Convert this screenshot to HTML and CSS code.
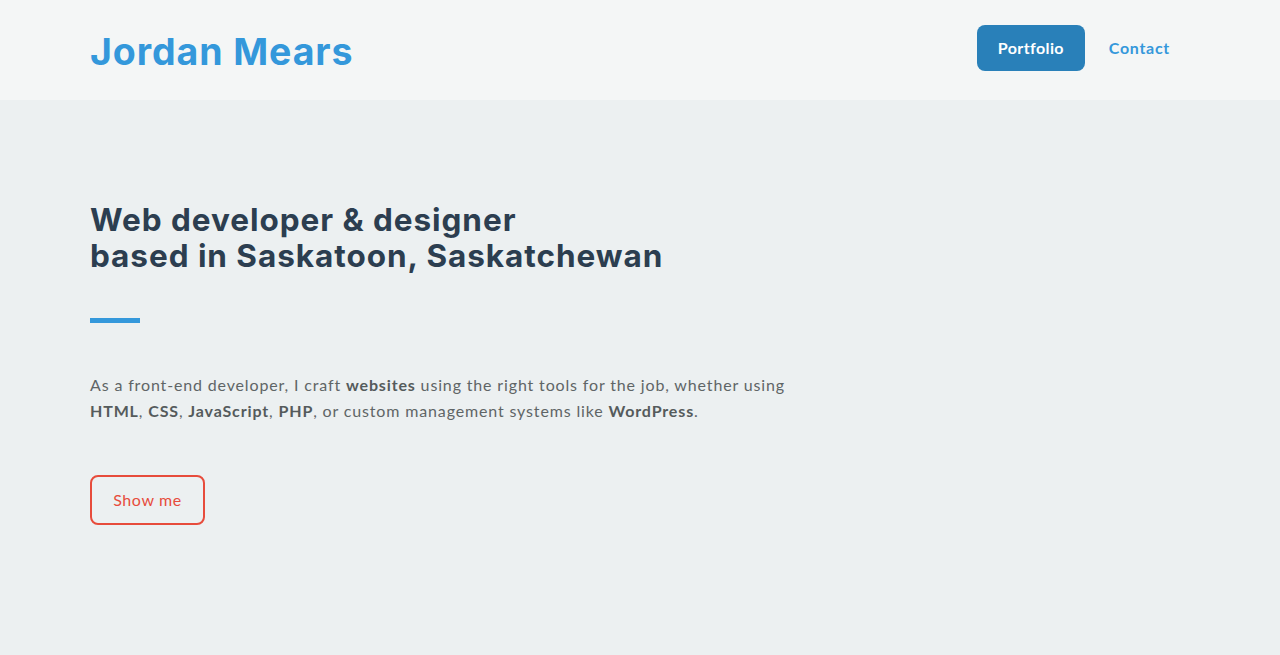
FILE: index.html
```html
<!DOCTYPE html>
<html>
<head>
<meta charset="utf-8">
<link rel="stylesheet" href="styles.css">
</head>
<body>
<header class="site-header">
  <div class="container header-inner">
    <a class="logo" href="#">Jordan Mears</a>
    <nav class="nav">
      <a class="nav-link active" href="#">Portfolio</a>
      <a class="nav-link" href="#">Contact</a>
    </nav>
  </div>
</header>
<main class="hero">
  <div class="container">
    <h1 class="title">Web developer &amp; designer<br>based in Saskatoon, Saskatchewan</h1>
    <div class="rule"></div>
    <p class="intro">As a front-end developer, I craft <strong>websites</strong> using the right tools for the job, whether using <strong>HTML</strong>, <strong>CSS</strong>, <strong>JavaScript</strong>, <strong>PHP</strong>, or custom management systems like <strong>WordPress</strong>.</p>
    <a class="btn-outline" href="#">Show me</a>
  </div>
</main>
</body>
</html>
```

FILE: styles.css
```css
* { box-sizing: border-box; }
html, body { margin: 0; padding: 0; }
body {
  background: #ecf0f1;
  font-family: "Lato", "Noto Sans", sans-serif;
  color: #5f6566;
  min-height: 655px;
}
a { text-decoration: none; }
.container {
  padding: 0 110px 0 90px;
}
.site-header {
  background: #f4f6f6;
  height: 100px;
}
.header-inner {
  height: 100px;
  display: flex;
  align-items: center;
  justify-content: space-between;
}
.logo {
  font-family: "Inter", "DejaVu Sans", sans-serif;
  font-weight: 700;
  font-size: 37.5px;
  letter-spacing: 0.9px;
  color: #3498db;
  margin-top: 2px;
}
.nav {
  display: flex;
  align-items: center;
  gap: 24px;
  margin-top: -4px;
}
.nav-link {
  font-size: 16px;
  font-weight: 700;
  color: #3498db;
  letter-spacing: 0.7px;
  line-height: 20px;
  padding: 13px 0;
}
.nav-link.active {
  background: #2980b9;
  color: #fff;
  border-radius: 8px;
  padding: 13px 0;
  width: 108px;
  letter-spacing: 0.4px;
  text-align: center;
}
.hero {
  padding-top: 102px;
}
.title {
  margin: 0;
  font-family: "Inter", "DejaVu Sans", sans-serif;
  font-weight: 700;
  font-size: 31.5px;
  line-height: 36px;
  letter-spacing: 0.95px;
  color: #2c3e50;
}
.rule {
  width: 50px;
  height: 5px;
  background: #3498db;
  margin-top: 44px;
}
.intro {
  margin: 49px 0 0;
  max-width: 710px;
  font-size: 16px;
  line-height: 26px;
  letter-spacing: 0.85px;
  color: #5f6566;
}
.intro strong {
  font-weight: 700;
  color: #555b5c;
}
.btn-outline {
  display: inline-block;
  margin-top: 51px;
  border: 2px solid #e74c3c;
  border-radius: 8px;
  height: 50px;
  line-height: 46px;
  width: 115px;
  text-align: center;
  font-size: 16px;
  color: #e74c3c;
  letter-spacing: 0.6px;
}
```
